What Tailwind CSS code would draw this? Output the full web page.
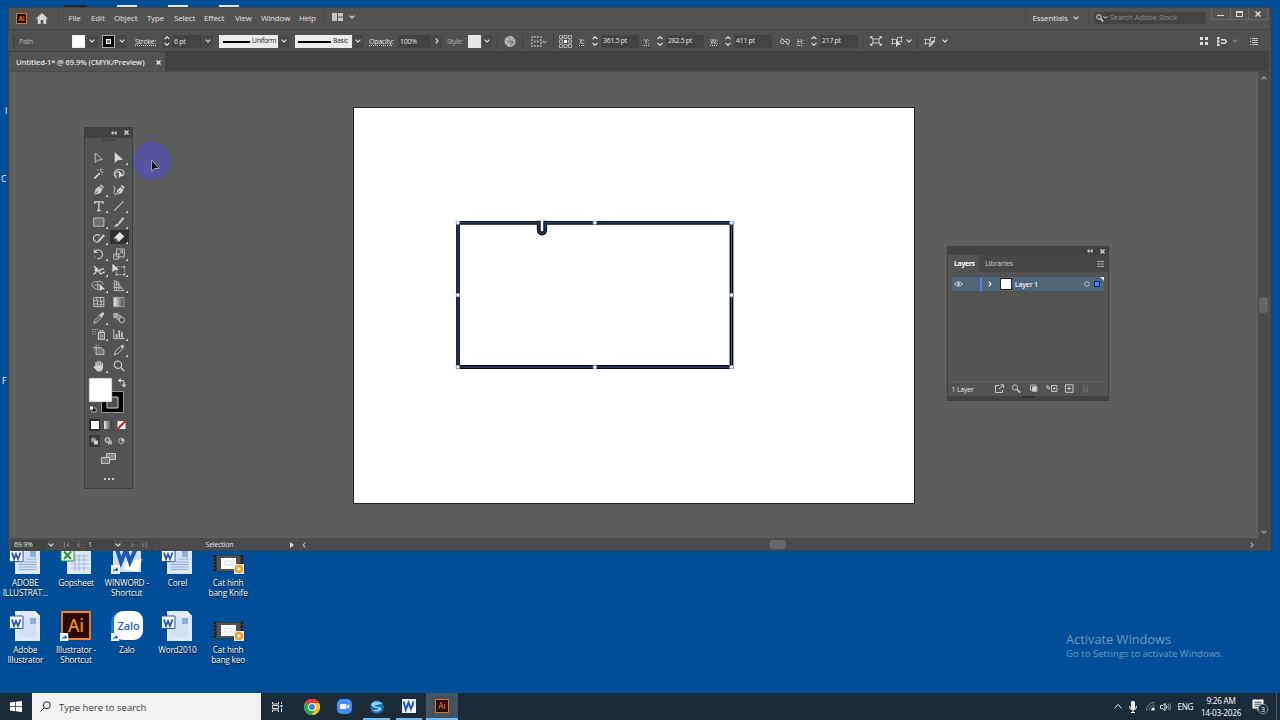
<!DOCTYPE html>
<html lang="en">
  <head>
    <meta charset="UTF-8" />
    <meta name="viewport" content="width=device-width, initial-scale=1.0" />
    <script src="https://cdn.jsdelivr.net/npm/@tailwindcss/browser@4"></script>
    <title>Untitled-1 - Illustrator</title>
  </head>
  <body class="relative h-[720px] w-[1280px] overflow-hidden bg-[#004e98] font-['Open_Sans','Noto_Sans',sans-serif] leading-none text-[#e2e2e2]">
    <!-- Shared icons -->
    <svg class="hidden">
      <symbol id="down" viewBox="0 0 6 4"><path d="M.6.7 3 3 5.4.7" fill="none" stroke="currentColor" stroke-width="1.1" /></symbol>
      <symbol id="right" viewBox="0 0 4 6"><path d="M.8.6 3 3 .8 5.4" fill="none" stroke="currentColor" stroke-width="1.2" /></symbol>
      <symbol id="step" viewBox="0 0 6 10"><path d="M.6 3 3 .8 5.4 3M.6 7 3 9.2 5.4 7" fill="none" stroke="currentColor" stroke-width="1.1" /></symbol>
      <symbol id="shortcut" viewBox="0 0 9 9"><path d="M0 0h9v9H0z" fill="#f4f6fa" /><path d="M2 7.500c0-2.500 1-3.500 3-3.700V2l2.500 2.500L5 7V5.400C3.500 5.400 2.700 6 2 7.500z" fill="#1c5fb4" /></symbol>
      <symbol id="doc" viewBox="0 0 32 30">
        <path d="M6 0h20l5 5v25H6z" fill="#dfe9f8" /><path d="M26 0v5h5z" fill="#fff" /><path d="M10 8h17v18H10z" fill="#c5d6f0" opacity=".5" />
        <path d="M21 7h6v6h-6z" fill="#8eb0df" />
        <path d="M.5 5h13.500v12.500H.5z" fill="#f7faff" stroke="#2b57a7" />
        <path d="M3 8.500 5 15l2-5 2 5 2.500-6.500" fill="none" stroke="#2b57a7" stroke-width="1.800" />
      </symbol>
      <symbol id="doclines" viewBox="0 0 32 30">
        <use href="#doc" width="32" height="30" /><path d="M17 15h11M9 18h19M9 20.500h19M9 23h19M9 25.500h19" stroke="#8aa4d0" stroke-width=".8" />
      </symbol>
      <symbol id="film" viewBox="0 0 31 20">
        <path d="M0 1h31v17H0z" fill="#2f3d4b" /><path d="M2 1v17M29 1v17" stroke="#161e28" stroke-width="2" stroke-dasharray="2 1.500" />
        <path d="M4 2h23v15H4z" fill="#535353" /><path d="M8 4h15v11H8z" fill="#fff" /><path d="M12 7h7v4h-7z" fill="none" stroke="#ccc" stroke-width=".7" />
        <path d="M21 10h10v10H21z" fill="#dfe4ec" /><circle cx="26" cy="15" r="4.300" fill="#f0a11f" /><path d="M24.700 12.800v4.400l3.500-2.200z" fill="#fff" />
      </symbol>
      <symbol id="ai" viewBox="0 0 30 29">
        <path d="M1 1h28v27H1z" fill="#2a0a02" stroke="#f18a2c" stroke-width="1.800" />
      </symbol>
    </svg>

    <!-- Desktop items that stick out behind the window -->
    <div class="absolute left-[64px] top-[5px] flex gap-[30px]">
      <i class="h-[3px] w-[23px] bg-[#1c2733]"></i>
      <i class="h-[3px] w-[20px] bg-[#dfe8f4]"></i>
      <i class="ml-[1px] h-[3px] w-[20px] bg-[#dfe8f4]"></i>
      <i class="ml-[1px] h-[3px] w-[20px] bg-[#dfe8f4]"></i>
    </div>
    <span class="absolute left-[5px] top-[107px] text-[8.5px] text-white">I</span>
    <span class="absolute left-[1px] top-[175px] text-[8.5px] text-white">C</span>
    <span class="absolute left-[2px] top-[377px] text-[8.5px] text-white">F</span>

    <!-- Desktop icons -->
    <div class="absolute left-0 top-[543.500px] grid grid-cols-[repeat(5,50.700px)] grid-rows-[67.500px_67.500px] text-center text-[8.2px] leading-[10.300px] tracking-[-0.15px] text-white [text-shadow:0_1px_1px_#000]">
      <div class="flex flex-col items-center gap-[4px]"><svg class="h-[30px] w-[32px]"><use href="#doclines" /></svg><span>ADOBE<br />ILLUSTRAT...</span></div>
      <div class="flex flex-col items-center gap-[4px]">
        <svg class="h-[30px] w-[32px]" viewBox="0 0 32 30"><path d="M7 0h19l5 5v25H7z" fill="#dfe9f8" /><path d="M15 12h14M15 16h14M11 20h18M11 24h18M15 10v17M19 10v17M24 10v17" stroke="#9db3d4" stroke-width=".9" /><path d="M1 5h13v12H1z" fill="#eef8ee" stroke="#2d9040" /><path d="m4 7.500 7 7.500M11 7.500 4 15" stroke="#2d9040" stroke-width="2" /></svg>
        <span>Gopsheet</span>
      </div>
      <div class="flex flex-col items-center gap-[4px]">
        <svg class="h-[30px] w-[32px]" viewBox="0 0 32 30"><path d="M2 2h28v26H2z" fill="#cfdff5" /><path d="m14 18 17-3-4 13-14-3z" fill="#fff" /><path d="m6 5 4 13 5-12 4 12 6-14" fill="none" stroke="#1d58b0" stroke-width="4" /><use href="#shortcut" x="0" y="21" width="9" height="9" /></svg>
        <span>WINWORD -<br />Shortcut</span>
      </div>
      <div class="flex flex-col items-center gap-[4px]"><svg class="h-[30px] w-[32px]"><use href="#doclines" /></svg><span>Corel</span></div>
      <div class="flex flex-col items-center gap-[4px]"><svg class="mt-[10px] h-[20px] w-[31px]"><use href="#film" /></svg><span>Cat hinh<br />bang Knife</span></div>

      <div class="flex flex-col items-center gap-[4px]"><svg class="h-[30px] w-[32px]"><use href="#doc" /></svg><span>Adobe<br />Illustrator</span></div>
      <div class="flex flex-col items-center gap-[4px]">
        <svg class="h-[30px] w-[32px]" viewBox="0 0 32 30"><use href="#ai" x="1" y="0" width="30" height="29" /><text x="16" y="20.500" text-anchor="middle" font-size="17.500" font-weight="500" fill="#f18a2c" class="font-['Noto_Sans'] [text-shadow:none]">Ai</text><use href="#shortcut" x="0" y="22" width="8.500" height="8.500" /></svg>
        <span>Illustrator -<br />Shortcut</span>
      </div>
      <div class="flex flex-col items-center gap-[4px]">
        <svg class="h-[30px] w-[32px]" viewBox="0 0 32 30"><rect x="0" y="1" width="30" height="28" rx="10" fill="#1a73e8" /><rect x="3" width="29" height="29" rx="9" fill="#fff" /><text x="17.500" y="18.500" text-anchor="middle" font-size="11" font-weight="600" fill="#1565d8" class="[text-shadow:none]">Zalo</text><use href="#shortcut" x="0" y="22" width="8.500" height="8.500" /></svg>
        <span>Zalo</span>
      </div>
      <div class="flex flex-col items-center gap-[4px]"><svg class="h-[30px] w-[32px]"><use href="#doc" /></svg><span>Word2010</span></div>
      <div class="flex flex-col items-center gap-[4px]"><svg class="mt-[10px] h-[20px] w-[31px]"><use href="#film" /></svg><span>Cat hinh<br />bang keo</span></div>
    </div>

    <!-- Windows watermark -->
    <div class="absolute left-[1066px] top-[630.500px] text-[#6d9bc8]">
      <p class="text-[12.8px] leading-[16px]">Activate Windows</p>
      <p class="text-[9.6px] leading-[14px]">Go to Settings to activate Windows.</p>
    </div>

    <!-- Illustrator window -->
    <div class="absolute left-[8px] top-[7px] flex h-[544px] w-[1263px] flex-col bg-[#535353] shadow-[inset_0_0_0_1px_#444]">
      <!-- Menu bar -->
      <header class="flex h-[22px] shrink-0 items-center border-t border-[#444] pb-[1px] text-[8px] tracking-[-0.15px]">
        <svg class="ml-[8px] h-[11px] w-[11px]" viewBox="0 0 11 11"><path d="M.5.5h10v10H.5z" fill="#2c0f02" stroke="#d9782a" /><text x="5.500" y="8" text-anchor="middle" font-size="6.500" font-weight="600" fill="#e8852f">Ai</text></svg>
        <svg class="ml-[9px] h-[11px] w-[12px]" viewBox="0 0 12 11"><path d="M6 0 0 5.500h1.700V11h3V7h2.600v4h3V5.500H12z" fill="#d4d4d4" /></svg>
        <i class="ml-[10px] h-[20px] w-px bg-[#4a4a4a]"></i>
        <nav class="-mt-[1px] flex">
          <span class="ml-[9.500px] w-[22.500px]">File</span>
          <span class="w-[23px]">Edit</span>
          <span class="w-[33px]">Object</span>
          <span class="w-[27px]">Type</span>
          <span class="w-[30px]">Select</span>
          <span class="w-[31px]">Effect</span>
          <span class="w-[26px]">View</span>
          <span class="w-[38px]">Window</span>
          <span class="w-[24px]">Help</span>
        </nav>
        <i class="h-[20px] w-px bg-[#4a4a4a]"></i>
        <svg class="-mt-[2px] ml-[8px] h-[8px] w-[11px]" viewBox="0 0 11 8"><path d="M0 0h5v8H0zM6 0h5v3.500H6zM6 4.500h5V8H6z" fill="#c4c4c4" /></svg>
        <svg class="-mt-[2px] ml-[6px] h-[4px] w-[6px]"><use href="#down" /></svg>
        <div class="ml-auto flex h-full items-center">
          <i class="h-[20px] w-px bg-[#4a4a4a]"></i>
          <span class="-mt-[1px] ml-[7px] w-[40px]">Essentials</span>
          <svg class="h-[4px] w-[6px]"><use href="#down" /></svg>
          <i class="ml-[9px] h-[20px] w-px bg-[#4a4a4a]"></i>
          <div class="ml-[5px] flex h-[12px] w-[112px] items-center rounded-sm bg-[#434343] text-[#8c8c8c]">
            <svg class="ml-[2px] h-[8px] w-[12px] text-[#ddd]" viewBox="0 0 12 8"><circle cx="3" cy="3" r="2.300" fill="none" stroke="currentColor" /><path d="m4.700 4.700 2.600 2.800" stroke="currentColor" stroke-width="1.300" /><path d="m7.500 2.500 2 1.600 2-1.600" fill="none" stroke="currentColor" /></svg>
            <span class="ml-[2px] text-[7.500px] tracking-[-0.080px]">Search Adobe Stock</span>
          </div>
          <div class="ml-[5px] mr-[3.500px] flex h-[12px] self-start border border-t-0 border-[#676767]">
            <span class="flex w-[18px] items-center justify-center"><i class="mt-[4px] h-[1.500px] w-[7px] bg-[#d8d8d8]"></i></span>
            <span class="flex w-[19px] items-center justify-center border-x border-[#676767]"><i class="h-[6px] w-[7px] border border-t-2 border-[#d8d8d8]"></i></span>
            <span class="flex w-[18px] items-center justify-center"><svg class="h-[6px] w-[6px]" viewBox="0 0 6 6"><path d="m.5.5 5 5M5.500.5l-5 5" stroke="#e4e4e4" stroke-width="1.300" /></svg></span>
          </div>
        </div>
      </header>

      <!-- Control bar -->
      <div class="flex h-[23px] shrink-0 items-center border-y border-[#444] bg-[#505050] pt-[1px] text-[7px] font-medium tracking-[-0.25px] [&>*]:shrink-0">
        <i class="ml-[5px] h-[13px] w-[2px] border-x border-[#454545]"></i>
        <span class="ml-[4px] w-[53px] text-[#b4b4b4]">Path</span>
        <i class="h-[13px] w-[13px] border border-[#eee] bg-white"></i>
        <span class="ml-[2px] flex h-[13px] w-[10px] items-center justify-center bg-[#484848]"><svg class="h-[4px] w-[6px]"><use href="#down" /></svg></span>
        <i class="ml-[5px] flex h-[13px] w-[13px] items-center justify-center border border-[#aaa] bg-black"><i class="h-[5px] w-[5px] border border-white bg-[#777]"></i></i>
        <span class="ml-[1px] flex h-[13px] w-[11px] items-center justify-center bg-[#484848]"><svg class="h-[4px] w-[6px]"><use href="#down" /></svg></span>
        <span class="ml-[8px] w-[27px] underline decoration-dotted">Stroke:</span>
        <span class="flex h-[13px] w-[9px] items-center justify-center bg-[#484848]"><svg class="h-[10px] w-[6px]"><use href="#step" /></svg></span>
        <span class="ml-[1px] flex h-[13px] w-[30px] items-center bg-[#434343] pl-[2px]">6 pt</span>
        <span class="ml-[1px] flex h-[13px] w-[10px] items-center justify-center bg-[#484848]"><svg class="h-[4px] w-[6px]"><use href="#down" /></svg></span>
        <span class="ml-[6px] flex h-[13px] w-[59px] items-center bg-[#ececec] pl-[4px] pt-[1px] text-[6.700px] text-[#222]"><i class="mr-[2px] h-[2px] w-[27px] bg-black"></i>Uniform</span>
        <span class="ml-[1px] flex h-[13px] w-[10px] items-center justify-center bg-[#484848]"><svg class="h-[4px] w-[6px]"><use href="#down" /></svg></span>
        <span class="ml-[6px] flex h-[13px] w-[57px] items-center bg-[#ececec] pl-[3px] pt-[1px] text-[6.700px] text-[#222]"><i class="mr-[2px] h-[2px] w-[33px] bg-black"></i>Basic</span>
        <span class="ml-[1px] flex h-[13px] w-[10px] items-center justify-center bg-[#484848]"><svg class="h-[4px] w-[6px]"><use href="#down" /></svg></span>
        <span class="ml-[6px] w-[29px] underline decoration-dotted">Opacity:</span>
        <span class="flex h-[13px] w-[33px] items-center bg-[#434343] pl-[2px]">100%</span>
        <span class="ml-[1px] flex h-[13px] w-[10px] items-center justify-center bg-[#484848]"><svg class="h-[6px] w-[4px]"><use href="#right" /></svg></span>
        <span class="ml-[5px] w-[21px] text-[#b8b8b8]">Style:</span>
        <i class="h-[13px] w-[13px] bg-[#e6e6e6]"></i>
        <span class="ml-[1px] flex h-[13px] w-[10px] items-center justify-center bg-[#484848]"><svg class="h-[4px] w-[6px]"><use href="#down" /></svg></span>
        <i class="ml-[5px] h-[15px] w-px bg-[#444]"></i>
        <svg class="ml-[6px] h-[11px] w-[12px]" viewBox="0 0 12 11"><circle cx="6" cy="5.500" r="5" fill="#b4b4b4" stroke="#ccc" stroke-width=".8" /><path d="M6 5.500Q9 4.500 10 2M6 5.500Q8 8 7 10.300M6 5.500Q3 7 2 9M6 5.500Q3 4 1.300 5M6 5.500Q6.500 3 5 .8" fill="none" stroke="#777" stroke-width=".7" /><path d="M6 5.500 9.800 5l-1 3.500z" fill="#777" /></svg>
        <i class="ml-[6px] h-[15px] w-px bg-[#444]"></i>
        <svg class="ml-[8px] h-[11px] w-[16px]" viewBox="0 0 16 11"><path d="M.2 1h1.600M3 1h1.600M6 1h1.600M9 1h1.600M.2 10h1.600M3 10h1.600M6 10h1.600M9 10h1.600M.2 4h1.600M.2 7h1.600M9 4h1.600M9 7h1.600M3 5.500h1.600M6 5.500h1.600" stroke="#c4c4c4" stroke-width="1.300" /><path d="m11.500 5 2 2 2-2" fill="none" stroke="#ccc" /></svg>
        <i class="ml-[6px] h-[15px] w-px bg-[#444]"></i>
        <svg class="ml-[5px] h-[13px] w-[13px]" viewBox="0 0 13 13"><path d="M2.500 2.500h8v8h-8z" fill="none" stroke="#999" stroke-width=".7" /><path d="M.5.500h3v3h-3zM5 .5h3v3H5zM9.500.5h3v3h-3zM.5 5h3v3h-3zM9.500 5h3v3h-3zM.5 9.500h3v3h-3zM5 9.500h3v3H5zM9.500 9.500h3v3h-3z" fill="#505050" stroke="#c4c4c4" stroke-width=".8" /><path d="M5 5h3v3H5z" fill="#fff" /></svg>
        <span class="ml-[7px] w-[13px] underline decoration-dotted">X:</span>
        <svg class="h-[10px] w-[6px]"><use href="#step" /></svg>
        <span class="ml-[3px] flex h-[13px] w-[38px] items-center bg-[#434343] pl-[2px] text-[6.900px]">361.5 pt</span>
        <span class="ml-[5px] w-[13px] underline decoration-dotted">Y:</span>
        <svg class="h-[10px] w-[6px]"><use href="#step" /></svg>
        <span class="ml-[3px] flex h-[13px] w-[38px] items-center bg-[#434343] pl-[2px] text-[6.900px]">282.5 pt</span>
        <span class="ml-[6px] w-[15px] underline decoration-dotted">W:</span>
        <svg class="h-[10px] w-[6px]"><use href="#step" /></svg>
        <span class="ml-[3px] flex h-[13px] w-[38px] items-center bg-[#434343] pl-[2px] text-[6.900px]">411 pt</span>
        <svg class="ml-[8px] h-[9px] w-[10px]" viewBox="0 0 10 9"><path d="M4 2.500H2.500a2 2 0 0 0 0 4H4M6 2.500h1.500a2 2 0 0 1 0 4H6M3 4.500h4M1 .5l8 8" fill="none" stroke="#c4c4c4" /></svg>
        <span class="ml-[7px] w-[14px] underline decoration-dotted">H:</span>
        <svg class="h-[10px] w-[6px]"><use href="#step" /></svg>
        <span class="ml-[3px] flex h-[13px] w-[38px] items-center bg-[#434343] pl-[2px] text-[6.900px]">217 pt</span>
        <i class="ml-[5px] h-[15px] w-px bg-[#444]"></i>
        <svg class="ml-[6px] h-[10px] w-[12px]" viewBox="0 0 12 10"><path d="M3 3h6v4H3z" fill="none" stroke="#c4c4c4" /><path d="m0 0 3 3M12 0 9 3M0 10l3-3M12 10 9 7" stroke="#c4c4c4" stroke-width="1.200" /><path d="M0 0h3L0 3zM12 0H9l3 3zM0 10h3L0 7zM12 10H9l3-3z" fill="#c4c4c4" /></svg>
        <svg class="ml-[9px] h-[11px] w-[12px]" viewBox="0 0 12 11"><path d="M1.500 3.500h4v4h-4zM6.500 1.500h4v4h-4zM0 3.500h6M0 7.500h5M1.500 2v7M10.500 0v6.500M12 1.500H6" fill="none" stroke="#b4b4b4" stroke-width=".9" /><path d="M5 4v7l2-2 3-.5z" fill="#ddd" /></svg>
        <svg class="ml-[3px] h-[4px] w-[6px]"><use href="#down" /></svg>
        <i class="ml-[5px] h-[15px] w-px bg-[#444]"></i>
        <svg class="ml-[6px] h-[11px] w-[12px]" viewBox="0 0 12 11"><path d="M1.500 3.500h4v4h-4zM6.500 1.500h4v4h-4zM0 3.500h6M0 7.500h5M1.500 2v7M12 1.500H6" fill="none" stroke="#b4b4b4" stroke-width=".9" /><path d="m4.500 11 .7-2.500L9.500 4l1.700 1.500-4.500 4.700z" fill="#ccc" /></svg>
        <svg class="ml-[6px] h-[4px] w-[6px]"><use href="#down" /></svg>
        <svg class="ml-auto h-[8px] w-[8px]" viewBox="0 0 8 8"><path d="M0 0h3v3H0zM5 0h3v3H5zM0 5h3v3H0zM5 5h3v3H5z" fill="#ddd" /></svg>
        <svg class="ml-[9px] h-[9px] w-[10px]" viewBox="0 0 10 9"><path d="M0 0h2.500v2.500H0zM0 3.300h2.500v2.500H0zM0 6.500h2.500V9H0z" fill="#ddd" /><path d="M4 2.700h3.500a1.700 1.700 0 0 1 0 3.500H4" fill="none" stroke="#ddd" stroke-width="1.500" /></svg>
        <svg class="ml-[5px] h-[4px] w-[6px] text-[#808080]"><use href="#down" /></svg>
        <svg class="ml-[12px] mr-[13px] h-[7px] w-[8px]" viewBox="0 0 8 7"><path d="M2 .5h6M2 2.500h6M2 4.500h6M2 6.500h6" stroke="#bbb" /><path d="M0 .5h1M0 3.500h1M0 6.500h1" stroke="#ddd" /></svg>
      </div>

      <!-- Document tabs -->
      <div class="ml-[2px] mr-[2px] flex h-[20px] shrink-0 border-b border-[#4b4b4b] bg-[#424242]">
        <div class="flex w-[155px] items-center bg-[#535353] pl-[6px] pt-[1px] text-[7.500px] font-semibold tracking-[-0.090px]">
          <span class="w-[140px] whitespace-nowrap pt-[1px]">Untitled-1* @ 69.9% (CMYK/Preview)</span>
          <svg class="h-[5px] w-[5px]" viewBox="0 0 5 5"><path d="m.5.5 4 4M4.500.5l-4 4" stroke="#eee" stroke-width="1.200" /></svg>
        </div>
      </div>

      <!-- Canvas -->
      <div class="ml-[2px] mr-[2px] flex min-h-0 flex-1">
        <main class="flex-1 bg-[#5e5e5e] pl-[343px] pt-[35px]">
          <div class="h-[397px] w-[562px] border border-[#222] bg-white">
            <svg class="h-[395px] w-[560px]" viewBox="354 108 560 395">
              <path d="M538.800 222.800H458V367h273.500V222.800H545.200v7.500a3.200 3.200 0 0 1-6.400 0V220.800M545.200 220.800v3" fill="none" stroke="#060b1c" stroke-width="3.800" />
              <path d="M538.800 222.800H458V367h273.500V222.800H545.200v7.500a3.200 3.200 0 0 1-6.400 0V222.800" fill="none" stroke="#4a5f9c" stroke-width=".9" />
              <path d="M541 220h2v11h-2z" fill="#fff" />
              <path d="M456.200 221h3.200v3.200h-3.200zM593.200 221h3.200v3.200h-3.200zM729.800 221h3.200v3.200h-3.200zM456.200 293.500h3.200v3.200h-3.200zM729.800 293.500h3.200v3.200h-3.200zM456.200 365.500h3.200v3.200h-3.200zM593.200 365.500h3.200v3.200h-3.200zM729.800 365.500h3.200v3.200h-3.200z" fill="#fff" stroke="#8fa4e0" stroke-width=".7" />
            </svg>
          </div>
        </main>
        <div class="flex w-[11px] flex-col items-center bg-[#4b4b4b] text-[#aaa]">
          <svg class="mt-[4px] h-[4px] w-[6px] rotate-180"><use href="#down" /></svg>
          <i class="mt-[217px] h-[16px] w-[9px] rounded bg-[#666]"></i>
          <svg class="mb-[4px] mt-auto h-[4px] w-[6px]"><use href="#down" /></svg>
        </div>
      </div>

      <!-- Status bar -->
      <footer class="mx-[2px] mb-[1px] flex h-[12px] shrink-0 items-center bg-[#4b4b4b] pt-[1px] text-[7px] font-medium tracking-[-0.2px] [&>*]:shrink-0">
        <span class="ml-[2px] flex h-[10px] w-[35px] items-center bg-[#434343] pl-[2px]">69.9%</span>
        <svg class="ml-[1px] h-[4px] w-[6px]"><use href="#down" /></svg>
        <svg class="ml-[10px] h-[6px] w-[6px] text-[#777]" viewBox="0 0 6 6"><path d="M.5 0v6" stroke="currentColor" /><path d="M5 .5v5L2 3z" fill="currentColor" /></svg>
        <svg class="ml-[6px] h-[6px] w-[4px] text-[#777]" viewBox="0 0 4 6"><path d="M3.500.5v5L.5 3z" fill="currentColor" /></svg>
        <span class="ml-[7px] flex h-[10px] w-[26px] items-center bg-[#434343] pl-[1px]">1</span>
        <svg class="ml-[2px] h-[4px] w-[6px]"><use href="#down" /></svg>
        <svg class="ml-[10px] h-[6px] w-[4px] text-[#777]" viewBox="0 0 4 6"><path d="M.5.5v5l3-2.500z" fill="currentColor" /></svg>
        <svg class="ml-[6px] h-[6px] w-[6px] text-[#777]" viewBox="0 0 6 6"><path d="M5.500 0v6" stroke="currentColor" /><path d="M1 .5v5L4 3z" fill="currentColor" /></svg>
        <i class="ml-[5px] h-[10px] w-px bg-[#444]"></i>
        <span class="ml-[52.500px] w-[84.500px]">Selection</span>
        <svg class="h-[6px] w-[4px]" viewBox="0 0 4 6"><path d="M0 0v6l4-3z" fill="#ddd" /></svg>
        <svg class="ml-[8px] h-[6px] w-[4px] rotate-180 text-[#aaa]"><use href="#right" /></svg>
        <i class="ml-[463px] h-[9px] w-[17px] rounded bg-[#666]"></i>
        <svg class="ml-auto mr-[15px] h-[6px] w-[4px] text-[#aaa]"><use href="#right" /></svg>
      </footer>
    </div>

    <!-- Tools panel -->
    <aside class="absolute left-[84px] top-[127px] flex h-[362px] w-[49px] flex-col border border-[#3e3e3e] bg-[#535353]">
      <div class="flex h-[10px] items-center justify-end gap-[7px] bg-[#424242] pb-[1px] pr-[3px]">
        <svg class="h-[4px] w-[6px]" viewBox="0 0 6 4"><path d="M2.500 0v4L0 2zM5.500 0v4L3 2z" fill="#ddd" /></svg>
        <svg class="h-[5px] w-[5px]" viewBox="0 0 5 5"><path d="m.5.5 4 4M4.500.5l-4 4" stroke="#ddd" stroke-width="1.200" /></svg>
      </div>
      <i class="mx-auto mt-[1px] h-[2px] w-[14px] bg-[#444]"></i>
      <div id="tools" class="ml-[3.500px] mt-[9px] grid auto-rows-[16px] grid-cols-[20.500px_20.500px]"></div>

      <!-- Fill and stroke -->
      <svg class="ml-[3px] mt-[1px] h-[40px] w-[41px]" viewBox="88 375 41 40">
        <path d="M101.500 391.500h22v21h-22z" fill="#000" stroke="#999" /><path d="M107 397h11v11h-11z" fill="#505050" stroke="#ccc" />
        <path d="M89 378h23v24H89z" fill="#fff" stroke="#777" stroke-width=".6" />
        <path d="M120 380.500h2q2 0 2 2v3" fill="none" stroke="#d4d4d4" stroke-width="1.200" /><path d="m117.800 380.500 3-2.500v5zM121.500 384.500h5l-2.500 3z" fill="#d4d4d4" />
        <path d="M92 408h4v4h-4z" fill="#000" stroke="#ddd" stroke-width=".8" /><path d="M89.500 406h4v4h-4z" fill="#fff" stroke="#222" stroke-width=".7" />
      </svg>
      <div class="ml-[4px] mt-[4px] flex gap-[2.500px]">
        <i class="flex h-[12px] w-[11px] items-center justify-center bg-[#2e2e2e]"><i class="h-[8px] w-[8px] bg-white"></i></i>
        <i class="flex h-[12px] w-[11px] items-center justify-center border border-[#484848]"><i class="h-[8px] w-[8px] bg-gradient-to-r from-[#eee] to-[#333]"></i></i>
        <svg class="h-[12px] w-[11px]" viewBox="0 0 11 12"><path d="M1.500 2h8v8h-8z" fill="#fff" /><path d="m1.500 10 8-8" stroke="#d8151c" stroke-width="2.200" /></svg>
      </div>
      <div class="ml-[4px] mt-[4px] flex gap-[2.500px]">
        <svg class="h-[12px] w-[11px] bg-[#383838]" viewBox="0 0 11 12"><circle cx="4.500" cy="5" r="2.500" fill="#999" /><path d="M5 5.500h4v4H5z" fill="#ccc" /></svg>
        <svg class="h-[12px] w-[11px]" viewBox="0 0 11 12"><path d="M5 5.500h4v4H5z" fill="#aaa" /><circle cx="4.500" cy="5" r="2.500" fill="#777" stroke="#ccc" /></svg>
        <svg class="h-[12px] w-[11px]" viewBox="0 0 11 12"><circle cx="5.500" cy="6" r="2.700" fill="#555" stroke="#bbb" /><path d="M5.500 4h2v2.500h-2z" fill="#ddd" /></svg>
      </div>
      <svg class="mx-auto mt-[6px] h-[11px] w-[15px]" viewBox="0 0 15 11"><path d="M5.500.5h9v6h-9z" fill="#888" stroke="#c4c4c4" /><path d="M.5 4.500h8v6h-8z" fill="#777" stroke="#c4c4c4" /></svg>
      <div class="mt-[14px] flex justify-center gap-[2px]">
        <i class="h-[2px] w-[2px] bg-[#ccc]"></i><i class="h-[2px] w-[2px] bg-[#ccc]"></i><i class="h-[2px] w-[2px] bg-[#ccc]"></i>
      </div>
    </aside>

    <!-- Layers panel -->
    <aside class="absolute left-[947px] top-[246px] flex h-[155px] w-[162px] flex-col border border-[#3e3e3e] bg-[#535353] text-[7px] tracking-[-0.2px]">
      <div class="flex h-[8px] shrink-0 items-center justify-end gap-[7px] bg-[#424242] pr-[3px]">
        <svg class="h-[4px] w-[6px]" viewBox="0 0 6 4"><path d="M2.500 0v4L0 2zM5.500 0v4L3 2z" fill="#ddd" /></svg>
        <svg class="h-[5px] w-[5px]" viewBox="0 0 5 5"><path d="m.5.5 4 4M4.500.5l-4 4" stroke="#ddd" stroke-width="1.200" /></svg>
      </div>
      <div class="flex h-[17px] shrink-0 items-center bg-[#474747]">
        <span class="flex h-full w-[31px] items-center bg-[#535353] pl-[6px] font-bold tracking-[-0.4px] text-white">Layers</span>
        <span class="flex h-full w-[40px] items-center border-r border-[#404040] pl-[6px] font-semibold text-[#b4b4b4]">Libraries</span>
        <svg class="ml-auto mr-[4px] h-[6px] w-[7px]" viewBox="0 0 7 6"><path d="M0 .5h7M0 3h7M0 5.500h7" stroke="#bbb" stroke-width=".8" /></svg>
      </div>
      <div class="mx-[4px] mt-[5px] h-[105px] border-b border-[#606060]">
        <div class="flex h-[14px] items-center bg-[#4f657a]">
          <svg class="ml-[2px] h-[6px] w-[9px]" viewBox="0 0 9 6"><path d="M.5 3Q4.500-1.500 8.500 3 4.500 7.500.5 3z" fill="none" stroke="#ccd4dc" /><circle cx="4.500" cy="3" r="1.400" fill="#ccd4dc" /></svg>
          <i class="ml-[17px] h-[13px] w-[2px] bg-[#5a7cf0]"></i>
          <svg class="ml-[6px] h-[6px] w-[4px] text-white"><use href="#right" /></svg>
          <i class="ml-[8px] h-[12px] w-[12px] border border-[#222] bg-white"></i>
          <span class="ml-[3px] w-[70px] pt-[1px] font-semibold text-[#eee]">Layer 1</span>
          <svg class="h-[6px] w-[6px]" viewBox="0 0 6 6"><circle cx="3" cy="3" r="2.400" fill="none" stroke="#c4ccd4" stroke-width=".9" /></svg>
          <i class="ml-[4px] h-[6px] w-[6px] border border-[#0c2a70] bg-[#4f84f4]"></i>
          <svg class="ml-auto h-[4px] w-[4px] self-start" viewBox="0 0 4 4"><path d="M0 0h4v4z" fill="#e4e4e4" /></svg>
        </div>
      </div>
      <div class="flex h-[13px] items-center pl-[3.500px]">
        <span class="w-[43.500px] pt-[1px] font-medium">1 Layer</span>
        <svg class="h-[9px] w-[93px]" viewBox="0 0 93 9" fill="none" stroke="#c8c8c8">
          <path d="M4 1.500H.5v7h7V6M4 5l4-4M5.500.8H8.500V4" />
          <circle cx="20" cy="3.500" r="2.600" /><path d="m22 5.500 3.200 3.200" stroke-width="1.500" />
          <path d="M35.500 1H41v5.500h-5.500zM37.500 3h4.500v4.500h-4.500z" stroke-width=".8" /><path d="M37.500 3H41v3.500h-3.500z" fill="#ddd" />
          <path d="M52 1v3h3m-1.500-1.500L55 4l-1.500 1.500M56.500 1.500H62v6h-5.500zM59.200 3v3M57.800 4.500h3" />
          <path d="M70.500.8H78v7.500h-7.500zM74.200 2.500v4M72.200 4.500h4" />
          <path d="M87.500 2h6M89.500.8h2M88.500 2.500V8h4V2.500M90.500 4v3" stroke="#6c6c6c" />
        </svg>
      </div>
      <div class="mt-auto flex h-[4px] justify-center bg-[#424242]"><i class="h-[2px] w-[12px] bg-[#333]"></i></div>
    </aside>

    <!-- Pointer with click highlight -->
    <div class="absolute left-[133px] top-[142px] h-[38px] w-[38px] rounded-full bg-[#5953a0]">
      <svg class="ml-[18px] mt-[17px] h-[14px] w-[9px]" viewBox="0 0 9 14"><path d="M.7 1v11L3.300 9.600 8 9.300z" fill="#000" stroke="#ddd" stroke-width=".7" /></svg>
    </div>

    <!-- Taskbar -->
    <footer class="absolute bottom-0 left-0 flex h-[27px] w-full items-center bg-[#1b2b38]">
      <svg class="ml-[10px] h-[11px] w-[12px]" viewBox="0 0 12 11"><path d="m0 1.500 5-.7v4.400H0zM5.700.7 12 0v5.200H5.700zM0 5.900h5v4.400l-5-.7zM5.700 5.900H12V11l-6.300-.7z" fill="#fff" /></svg>
      <div class="ml-[10px] flex h-full w-[229px] items-center bg-[#f2f2f2]">
        <svg class="ml-[8px] h-[11px] w-[11px]" viewBox="0 0 11 11"><circle cx="6.800" cy="4.200" r="3.500" fill="none" stroke="#222" /><path d="M4.300 6.700.5 10.500" stroke="#222" /></svg>
        <span class="ml-[8px] pt-[2px] text-[9.500px] text-[#3c3c3c]">Type here to search</span>
      </div>
      <div class="flex h-full">
        <div class="flex w-[33px] items-center justify-center">
          <svg class="h-[10px] w-[11px]" viewBox="0 0 11 10"><path d="M.5 0v2h6V0M.5 10V8h6v2M.5 3.500h6v3h-6zM9.500 0v2M9.500 6v4" fill="none" stroke="#ddd" /><path d="M8.500 3h2v2h-2z" fill="#ddd" /></svg>
        </div>
        <div class="flex w-[35px] items-center justify-center">
          <svg class="h-[16px] w-[16px]" viewBox="0 0 16 16"><circle cx="8" cy="8" r="8" fill="#fbc116" /><path d="M8 8 1.070 4A8 8 0 0 1 14.930 4z" fill="#e33b2e" /><path d="M8 8 1.070 4A8 8 0 0 0 8 16l3.500-6z" fill="#2da94f" /><path d="M8 4h6.930A8 8 0 0 1 8 16l3.500-6z" fill="#fbc116" /><circle cx="8" cy="8" r="3.900" fill="#fff" /><circle cx="8" cy="8" r="3" fill="#3f7fe8" /></svg>
        </div>
        <div class="flex w-[31px] items-center justify-center">
          <svg class="h-[15px] w-[15px]" viewBox="0 0 15 15"><rect width="15" height="15" rx="5" fill="#4a8cf5" /><rect x="3" y="5" width="6.500" height="5" rx="1" fill="#fff" /><path d="m10 7 2.300-1.700v4.400L10 8z" fill="#fff" /></svg>
        </div>
        <div class="ml-[3px] flex w-[27px] items-center justify-center border-b-2 border-[#76b9ed] pt-[2px]">
          <svg class="h-[14px] w-[14px]" viewBox="0 0 14 14"><circle cx="7" cy="7" r="6.800" fill="#1b6fb4" /><path d="M1 4Q6-.5 12.500 3.500L5 5.500q-1 1 1 1.300 6 0 5.500 2.700Q9 13 2 10.500l6-.9q1.500-.8-.5-1.400Q2 8 1 4z" fill="#8fd4f4" /></svg>
        </div>
        <div class="ml-[6px] flex w-[26px] items-center justify-center border-b-2 border-[#76b9ed]">
          <svg class="h-[14px] w-[14px]" viewBox="0 0 14 14"><path d="M0 0h14v14H0z" fill="#e6effa" /><path d="m1.500 2.500 2.300 8 2.700-7 2.700 7 2.300-8" fill="none" stroke="#1f5bb5" stroke-width="2" /><path d="m10 9 4-1v5l-5 1z" fill="#fff" /></svg>
        </div>
        <div class="ml-[4px] flex w-[32px] items-center justify-center border-b-2 border-[#76b9ed] bg-[#42525f]">
          <svg class="h-[14px] w-[14px]" viewBox="0 0 14 14"><path d="M.5.5h13v13H.5z" fill="#2a0a02" stroke="#d9782a" /><text x="7" y="10.200" text-anchor="middle" font-size="8.500" font-weight="500" fill="#f18a2c">Ai</text></svg>
        </div>
      </div>
      <div class="ml-auto flex h-full items-center text-[8.200px] text-white">
        <svg class="h-[5px] w-[8px]" viewBox="0 0 8 5"><path d="m.5 4.500 3.500-4 3.500 4" fill="none" stroke="#eee" /></svg>
        <svg class="ml-[7px] h-[12px] w-[8px]" viewBox="0 0 8 12"><rect x="2" width="4" height="8" rx="1.500" fill="#fff" /><path d="M.5 5q0 4 3.500 4t3.500-4M4 9v2.500M2 11.500h4" fill="none" stroke="#fff" /></svg>
        <svg class="ml-[9px] h-[9px] w-[9px]" viewBox="0 0 9 9"><path d="M.5 8.500A8 8 0 0 1 8.500.5M3 8.500a5.500 5.500 0 0 1 5.500-5.500" fill="none" stroke="#7c8891" /><path d="M5.200 8.500a3.300 3.300 0 0 1 3.300-3.300v3.300z" fill="#e8e8e8" /></svg>
        <svg class="ml-[5px] h-[10px] w-[11px]" viewBox="0 0 11 10"><path d="M.5 3.500h2l2.500-2v7l-2.500-2h-2z" fill="none" stroke="#eee" /><path d="M6.500 3.500q1 1.500 0 3" fill="none" stroke="#eee" /><path d="M8 2q2 3 0 6M9.500 1q2.500 4 0 8" fill="none" stroke="#7c8891" /></svg>
        <span class="ml-[7px] w-[23px] pt-[1px] tracking-[-0.3px]">ENG</span>
        <span class="flex w-[41px] flex-col items-center whitespace-nowrap leading-[12px] tracking-[-0.25px]"><span>9:26 AM</span><span>14-03-2026</span></span>
        <svg class="ml-[10.500px] h-[17px] w-[17px]" viewBox="0 0 17 17"><path d="M.5 1.500h11v9H8L5.500 13v-2.500h-5z" fill="#fff" /><path d="M2.500 4.200h7M2.500 6.200h7M2.500 8.200h4" stroke="#1b2b38" stroke-width=".9" /><circle cx="11" cy="11" r="4.800" fill="#1b2b38" stroke="#999" stroke-width=".9" /><text x="11" y="13.700" text-anchor="middle" font-size="7.500" fill="#fff">3</text></svg>
        <i class="ml-[7px] mr-[3px] h-full w-px bg-[#4c5963]"></i>
      </div>
    </footer>

    <script>
      // icon markup is drawn in a 14x14 box, "flyout" adds the corner triangle
      const tools = [
        { name: "Selection", icon: `<path d="M3 1.500v10.500l3-2.800 5-.4z" fill="none" stroke="#c8c8c8"/>` },
        { name: "Direct Selection", flyout: true, icon: `<path d="M2.500.5v12l3.300-3.200 5.700-.4z" fill="#d8d8d8"/>` },
        { name: "Magic Wand", icon: `<path d="m2 12 6-6" stroke="#ccc" stroke-width="2"/><path d="M9 1v3M12 5H9.500M11.500 1.500 10 3M5 2l1.500 1.500M11 8l-1-1" stroke="#ccc"/>` },
        { name: "Lasso", icon: `<path d="M4 10.500C1 9 1 3 6 2s8 3 6 6M3 7c1-3 4-3 5-2M4 8c-1 2 1 2 0 4" fill="none" stroke="#c8c8c8" stroke-width="1.200"/><path d="M7 3.500v8l2-2 3.500-.3z" fill="#d8d8d8"/>` },
        { name: "Pen", flyout: true, icon: `<path d="m1.500 12.500 2-7L7.500 3 11 6.500 8.500 10.500z" fill="#ccc"/><path d="m8 2 1.500-1 3 3L11.500 5.500z" fill="#ccc"/><path d="M2 12 5.800 8.200" stroke="#535353"/>` },
        { name: "Curvature", icon: `<path d="m4 12.500 1.500-6L9 4l3 3-2 3.500z" fill="#ccc"/><path d="m9 3 1.500-1.500 3 3L12 6z" fill="#ccc"/><path d="M1 3c2 0 2 3 1 5s0 4 2 4" fill="none" stroke="#ccc"/><path d="M4.500 12 7.500 8.500" stroke="#535353"/>` },
        { name: "Type", flyout: true, icon: `<path d="M2.500 4.500V2.500h9v2M7 2.500V12M5 12h4" fill="none" stroke="#d4d4d4" stroke-width="1.500"/>` },
        { name: "Line", flyout: true, icon: `<path d="m2 12 10-10" stroke="#ccc" stroke-width="1.100"/>` },
        { name: "Rectangle", flyout: true, icon: `<path d="M1.500 2.500h11v9h-11z" fill="#707070" stroke="#c4c4c4"/>` },
        { name: "Paintbrush", flyout: true, icon: `<path d="m6 8 5.500-6.500L13 3 8 9.500z" fill="#ccc"/><path d="M1 12q2.500-.5 2.800-2.500Q6 7.500 7 9.500q.3 3-6 2.500z" fill="#ccc"/>` },
        { name: "Shaper", flyout: true, icon: `<path d="M7 11A4 4 0 1 1 8 4.500" fill="none" stroke="#ccc" stroke-width="1.200"/><path d="m5.500 11.500.7-2L12 3l1.700 1.500L7.500 11z" fill="#ccc"/>` },
        { name: "Eraser", flyout: true, active: true, icon: `<path d="m1.500 8 6.500-6.500 5 5L7 12H4.500z" fill="#e4e4e4"/><path d="m3 7.500 4 4-2.500.5-2.500-3z" fill="#555"/>` },
        { name: "Rotate", flyout: true, icon: `<path d="M3.500 3.500A4.700 4.700 0 1 1 6 12" fill="none" stroke="#ccc" stroke-width="1.200"/><path d="M1.500 1.500V6h4.500z" fill="#ccc"/><path d="M6 12a4.700 4.700 0 0 1-4-4" fill="none" stroke="#bbb" stroke-dasharray="1 1"/>` },
        { name: "Scale", flyout: true, icon: `<path d="M1.500 7h5.500v5.500H1.500zM4.500 1.500h8.500v8.500H4.500zM6.500 8l4-4M8 3.500h3v3" fill="none" stroke="#c8c8c8"/>` },
        { name: "Width", flyout: true, icon: `<path d="M1 11.500c3 0 3-5 5-4.500s1 4 3 4 2-2 4.500-1.500M2 2.500c1 2.500 2 3 4 3.500M6.500 7.500c2.500.5 3-2 6-2" fill="none" stroke="#ccc" stroke-width="1.600"/><path d="M2 5.500h4v3H3z" fill="#ccc"/>` },
        { name: "Free Transform", flyout: true, icon: `<path d="M4.500 3.500h8.500v8.500H4.500z" fill="none" stroke="#bbb" stroke-dasharray="1.500 1"/><path d="M12 2.500h2v2h-2zM12 11h2v2h-2zM3.500 11h2v2h-2z" fill="#ccc"/><path d="M0 0v9.500l2.500-2.300 4.500-.4z" fill="#d8d8d8"/>` },
        { name: "Shape Builder", flyout: true, icon: `<path d="M2 9a4 3.500 0 0 1 3-6.500 4 3.500 0 0 1 6.500 3M2 9c2 2 5 2 6 1M2 6h6M6 3v8" fill="none" stroke="#c0c0c0"/><path d="M8 4.500V13l2-2.200 3.500-.3z" fill="#d8d8d8"/>` },
        { name: "Perspective Grid", flyout: true, icon: `<path d="M2 1v11M2 1l5 2v8M4.500 2v10M2 5h5M2 8.500h6M2 12h11M7 5l5 6.500M7 9l3 .5" fill="none" stroke="#c0c0c0"/>` },
        { name: "Mesh", icon: `<path d="M1.500 2h11v10h-11zM1.500 6c4-2 6 2 11-.5M1.500 9.500c4-2 6 2 11-.5M5 2c-1 3 2 6 0 10M9 2c-1 3 2 6 0 10" fill="none" stroke="#c4c4c4"/>` },
        { name: "Gradient", icon: `<defs><linearGradient id="g"><stop stop-color="#eee"/><stop offset="1" stop-color="#444"/></linearGradient></defs><path d="M1.500 2h11v10h-11z" fill="url(#g)" stroke="#bbb" stroke-width=".8"/>` },
        { name: "Eyedropper", flyout: true, icon: `<path d="m1.500 12.500.8-2.500L8 4.500 9.800 6.200 4 12z" fill="none" stroke="#ccc"/><path d="m7 3.500 1.500-.5L10.500 1q2-.5 2.500 1.500L11 5l-.5 2z" fill="#ccc"/>` },
        { name: "Blend", icon: `<path d="M1 1.500h5.500V7H1z" fill="#aaa"/><circle cx="7.200" cy="6.500" r="2.700" fill="#888" stroke="#bbb" stroke-width=".8"/><circle cx="10.300" cy="9" r="3" fill="#535353" stroke="#ccc"/>` },
        { name: "Symbol Sprayer", flyout: true, icon: `<path d="M6.500 5.500h6.500v7H6.500zM8 5.500v-2h3.500v2" fill="none" stroke="#ccc" stroke-width="1.200"/><circle cx="9.700" cy="9" r="1.500" fill="none" stroke="#ccc"/><path d="M0 2h7M0 4.500h5M0 7h4" stroke="#bbb" stroke-width="1.200" stroke-dasharray="1.200 1.200"/>` },
        { name: "Graph", flyout: true, icon: `<path d="M1.500 1.500v10.500h12" fill="none" stroke="#ccc"/><path d="M4.500 11V7M7.500 11V3M10.500 11V5" stroke="#ccc" stroke-width="1.800"/>` },
        { name: "Artboard", icon: `<path d="M4 4.500h6l2.500 2.500v5H4z" fill="#777" stroke="#c8c8c8"/><path d="M4 1v3.500M.5 4.500H4M1.500 7h1M6.500 2h1" stroke="#c8c8c8"/>` },
        { name: "Slice", flyout: true, icon: `<path d="m2 12.500 1.500-4.500L9 3l2.500 2L7 10z" fill="none" stroke="#ccc"/><path d="m9 3 1.500-2 2.500 2-1.500 2z" fill="#ccc"/>` },
        { name: "Hand", flyout: true, icon: `<path d="M4 7V3M6.200 6.500V1.800M8.500 6.500V2.200M10.700 7V4" stroke="#d0d0d0" stroke-width="1.500" stroke-linecap="round"/><path d="M3.200 6.500h8.300v3L9.500 13h-4L1 8l1.200-.8z" fill="#d0d0d0"/>` },
        { name: "Zoom", icon: `<circle cx="6" cy="5.500" r="4" fill="none" stroke="#ccc" stroke-width="1.200"/><path d="m9 8.500 4 4" stroke="#ccc" stroke-width="1.600"/>` },
      ];

      document.getElementById("tools").innerHTML = tools
        .map((tool) => {
          const cellClass = tool.active
            ? "flex items-center justify-center mx-[1px] mb-[2px] bg-[#303030]"
            : "flex items-center justify-center pb-[1px]";
          const corner = tool.flyout
            ? `<path d="M16 11.500V14h-2.500z" fill="#d8d8d8"/>`
            : "";
          return `<div class="${cellClass}"><svg class="h-[14px] w-[18px]" viewBox="-2 0 18 14"><g transform="translate(.4 .6) scale(.92)">${tool.icon}</g>${corner}</svg></div>`;
        })
        .join("");
    </script>
  </body>
</html>
